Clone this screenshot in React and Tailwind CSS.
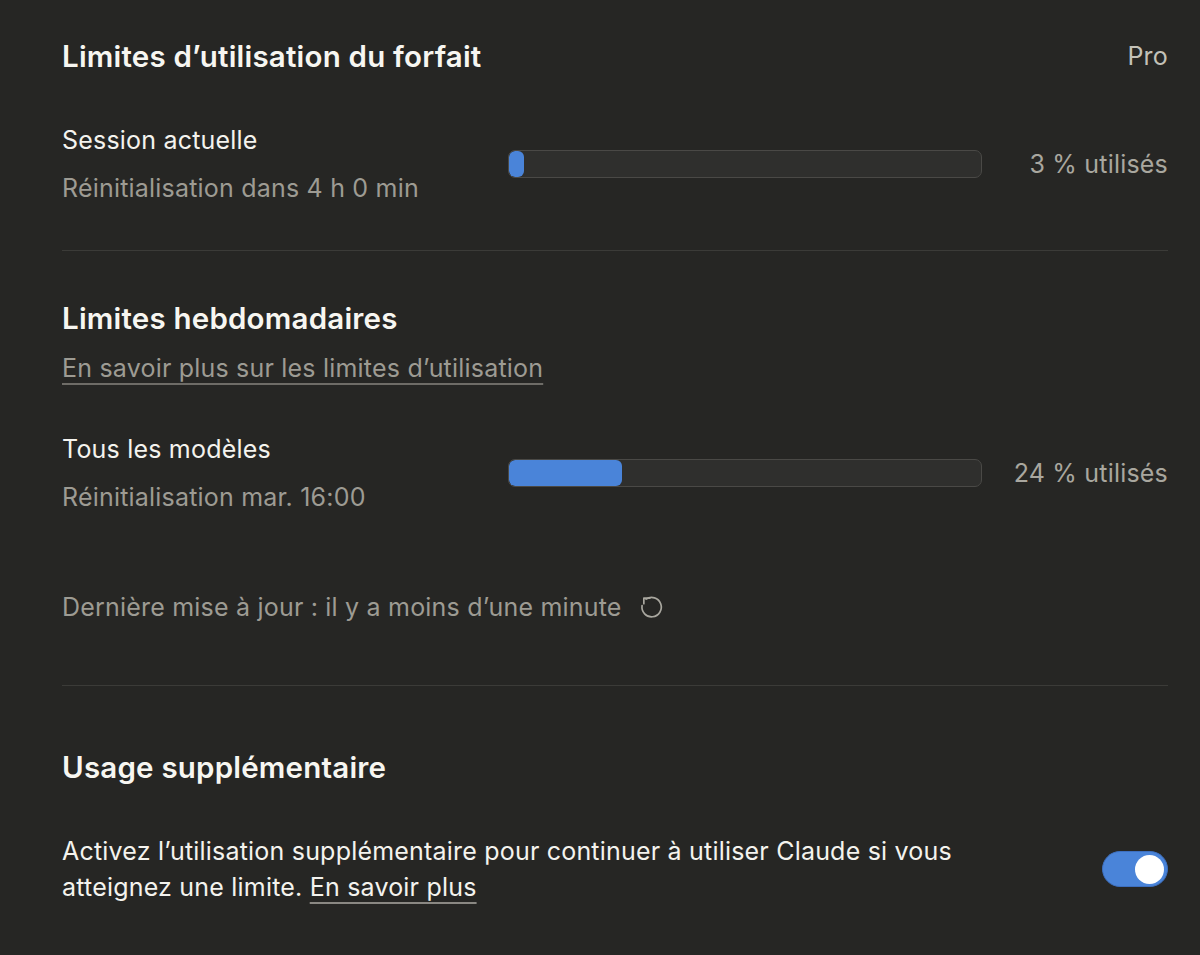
import React, { useState } from "react";

function UsageRow({ title, reset, percent }) {
  return (
    <div className="grid grid-cols-[446px_474px_1fr] items-center">
      <div className="flex flex-col gap-3">
        <span className="text-[25px] leading-9 text-[#f4f3ee]">{title}</span>
        <span className="text-[25px] leading-9 text-[#9d9b93]">{reset}</span>
      </div>
      <div className="h-[28px] rounded-[7px] border border-[#4a4946] bg-[#2f2f2d] overflow-hidden">
        <div
          className="h-full rounded-[6px] bg-[#4a84d9]"
          style={{ width: `max(${percent}%, 15px)` }}
        />
      </div>
      <span className="text-right text-[25px] leading-9 text-[#a9a79f]">{percent} % utilisés</span>
    </div>
  );
}

function RefreshIcon() {
  return (
    <svg width="27" height="27" viewBox="0 0 24 24" fill="none" stroke="#a9a79f" strokeWidth="1.5" strokeLinecap="round" strokeLinejoin="round">
      <path d="M7.2 4.6 A8.6 8.6 0 1 1 3.6 10.4" />
      <path d="M10.5 3.6 H5.2 V8.6" />
    </svg>
  );
}

export default function App() {
  const [extra, setExtra] = useState(true);

  return (
    <div className="min-h-[955px] w-full bg-[#262624] font-['Inter','Noto_Sans',sans-serif] tracking-[0.2px] antialiased">
      <div className="ml-[62px] mr-[32px] pt-[38px]">
        {/* Plan limits */}
        <div className="flex items-center justify-between">
          <h2 className="text-[29.5px] leading-9 font-semibold text-[#f7f6f1]">Limites d’utilisation du forfait</h2>
          <span className="text-[25px] leading-9 text-[#c3c1b8]">Pro</span>
        </div>
        <div className="mt-12">
          <UsageRow title="Session actuelle" reset="Réinitialisation dans 4 h 0 min" percent={3} />
        </div>

        <div className="mt-11 h-px bg-[#3b3b38]" />

        {/* Weekly limits */}
        <h2 className="mt-[49px] text-[29.5px] leading-9 font-semibold text-[#f7f6f1]">Limites hebdomadaires</h2>
        <a
          href="#"
          className="mt-[14px] inline-block text-[25px] leading-9 text-[#9d9b93] underline decoration-[#6e6c67] decoration-2 underline-offset-[6px]"
        >
          En savoir plus sur les limites d’utilisation
        </a>
        <div className="mt-[45px]">
          <UsageRow title="Tous les modèles" reset="Réinitialisation mar. 16:00" percent={24} />
        </div>

        <div className="mt-[74px] flex items-center gap-4 text-[25px] leading-9 text-[#9d9b93]">
          <span>Dernière mise à jour : il y a moins d’une minute</span>
          <RefreshIcon />
        </div>

        <div className="mt-[60px] h-px bg-[#3b3b38]" />

        {/* Extra usage */}
        <h2 className="mt-[63px] text-[29.5px] leading-9 font-semibold text-[#f7f6f1]">Usage supplémentaire</h2>
        <div className="mt-12 flex items-center justify-between">
          <p className="w-[940px] text-[25px] leading-9 text-[#f4f3ee]">
            Activez l’utilisation supplémentaire pour continuer à utiliser Claude si vous atteignez une limite.{" "}
            <a href="#" className="underline decoration-[#8a8883] decoration-2 underline-offset-[6px]">
              En savoir plus
            </a>
          </p>
          <button
            onClick={() => setExtra((v) => !v)}
            className={`flex h-[36px] w-[66px] items-center rounded-full border border-[#3d6fbf] p-[3px] ${
              extra ? "justify-end bg-[#4a84d9]" : "justify-start bg-[#4a4946]"
            }`}
          >
            <span className="h-[29px] w-[29px] rounded-full bg-white" />
          </button>
        </div>
      </div>
    </div>
  );
}
